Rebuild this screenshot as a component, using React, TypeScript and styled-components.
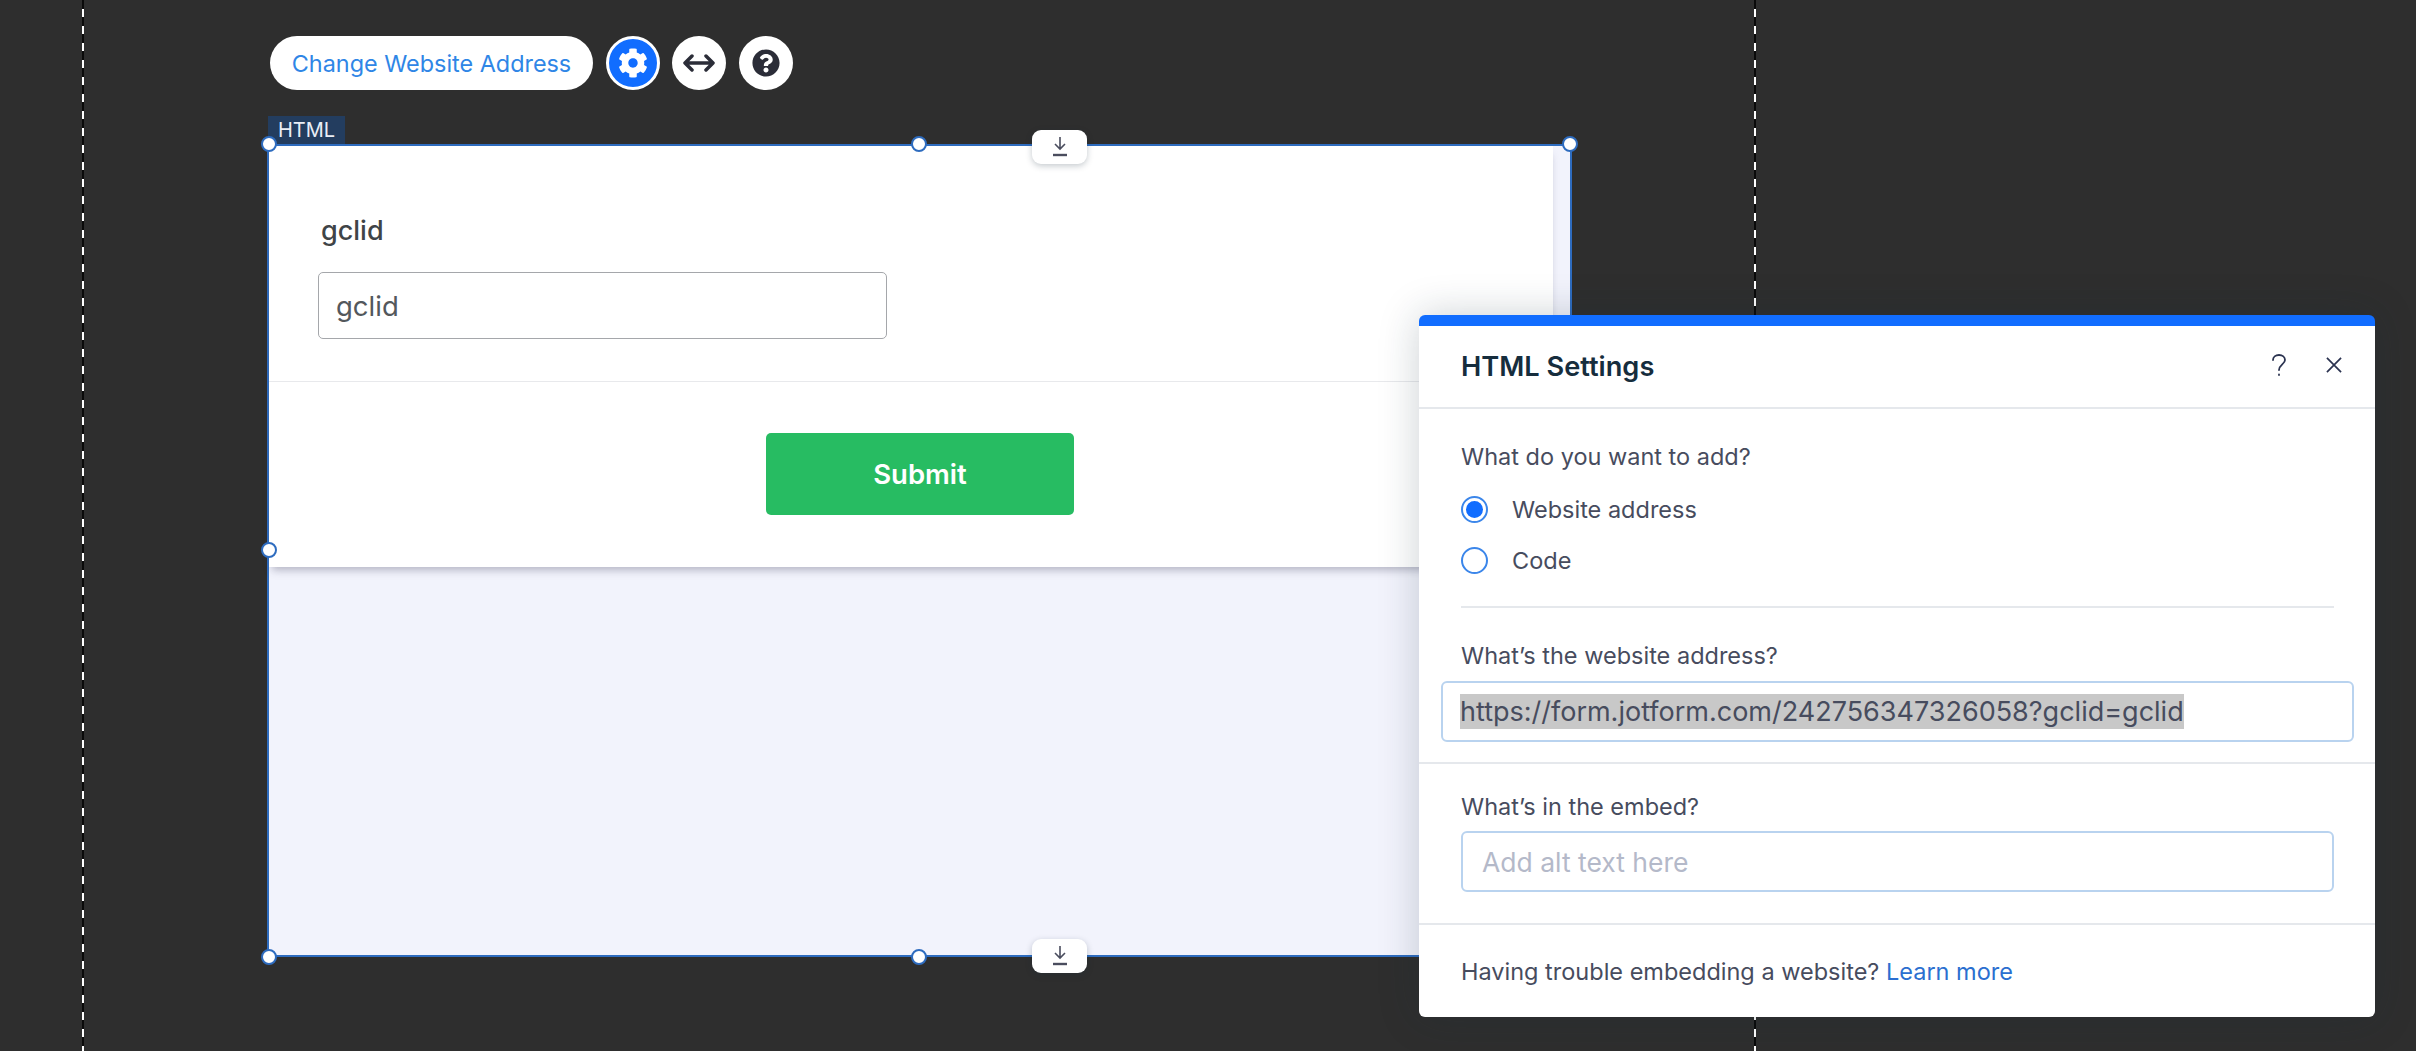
import styled, { createGlobalStyle } from "styled-components";
import { FaCog, FaQuestionCircle } from "react-icons/fa";

const GlobalStyle = createGlobalStyle`
  html, body {
    margin: 0;
    padding: 0;
    background: #2e2e2e;
    overflow: hidden;
  }
  * {
    box-sizing: border-box;
  }
`;

const Page = styled.div`
  position: relative;
  display: flex;
  width: 2416px;
  height: 1051px;
  padding-left: 82px;
  background: #2e2e2e;
  font-family: "Inter", "Liberation Sans", sans-serif;
`;

const Guide = styled.div`
  flex: none;
  width: 2px;
  height: 100%;
  background: repeating-linear-gradient(to bottom, #0a0a0a 0 9px, #ffffff 9px 17px);
`;

const Canvas = styled.div`
  flex: none;
  width: 1670px;
  padding: 36px 0 0 183px;
`;

const Toolbar = styled.div`
  display: flex;
  align-items: center;
  gap: 12.5px;
  height: 54px;
  margin-left: 3px;
`;

const PillButton = styled.button`
  width: 323px;
  height: 54px;
  padding: 0;
  border: none;
  border-radius: 27px;
  background: #fff;
  color: #2f86e6;
  font-family: inherit;
  font-size: 23.4px;
  white-space: nowrap;
`;

const RoundButton = styled.div<{ $active?: boolean }>`
  display: flex;
  align-items: center;
  justify-content: center;
  width: 54px;
  height: 54px;
  border-radius: 50%;
  background: ${(p) => (p.$active ? "#116dff" : "#fff")};
  border: ${(p) => (p.$active ? "3px solid #fff" : "none")};
  color: ${(p) => (p.$active ? "#fff" : "#2b2d38")};
`;

const Frame = styled.div`
  position: relative;
  width: 1305px;
  height: 813px;
  margin-top: 54px;
  border: 2px solid #2e6cbf;
  background: #f2f3fc;
`;

const Tag = styled.div`
  position: absolute;
  left: -1px;
  top: -30px;
  width: 77px;
  height: 28px;
  padding-left: 10px;
  background: #233d5f;
  color: #e9eef6;
  font-size: 20px;
  line-height: 28px;
`;

const Handle = styled.span<{ $x: string; $y: string }>`
  position: absolute;
  left: ${(p) => p.$x};
  top: ${(p) => p.$y};
  width: 16px;
  height: 16px;
  margin: -8px 0 0 -8px;
  border-radius: 50%;
  border: 2px solid #2e6cbf;
  background: #fff;
`;

const DragTab = styled.div<{ $bottom?: boolean }>`
  position: absolute;
  left: 763px;
  ${(p) => (p.$bottom ? "bottom: -18px;" : "top: -16px;")}
  display: flex;
  align-items: center;
  justify-content: center;
  width: 55px;
  height: 34px;
  border-radius: 9px;
  background: #fff;
  box-shadow: 0 2px 6px rgba(22, 45, 61, 0.25);
`;

const FormCard = styled.div`
  width: 1284px;
  height: 421px;
  background: #fff;
  box-shadow: 0 6px 8px -3px rgba(60, 60, 90, 0.35);
`;

const FormBody = styled.div`
  height: 236px;
  padding: 68px 0 0 49px;
  border-bottom: 1px solid #e8e9ec;
`;

const FieldLabel = styled.div`
  margin-left: 3px;
  padding-top: 1px;
  color: #3f4447;
  font-size: 27px;
  font-weight: 500;
  line-height: 32px;
`;

const TextBox = styled.div`
  display: flex;
  align-items: center;
  width: 569px;
  height: 67px;
  margin-top: 25px;
  padding-left: 17px;
  border: 1px solid #a5a7ab;
  border-radius: 5px;
  color: #53585c;
  font-size: 27.5px;
`;

const FormFooter = styled.div`
  display: flex;
  justify-content: center;
  padding: 51px 0 0 18px;
`;

const SubmitButton = styled.button`
  width: 308px;
  height: 82px;
  border: none;
  border-radius: 5px;
  background: #27bc62;
  color: #fff;
  font-family: inherit;
  font-size: 27.5px;
  font-weight: 600;
`;

const Panel = styled.div`
  position: absolute;
  left: 1419px;
  top: 315px;
  width: 956px;
  height: 702px;
  border-top: 11px solid #116dff;
  border-radius: 6px;
  background: #fff;
  box-shadow: 0 0 40px rgba(22, 45, 61, 0.22);
  color: #474c5e;
  font-size: 23.5px;
`;

const PanelHeader = styled.div`
  display: flex;
  align-items: center;
  justify-content: space-between;
  height: 83px;
  padding: 0 33px 0 42px;
  border-bottom: 2px solid #e5e8ec;
`;

const PanelTitle = styled.div`
  color: #162d3d;
  font-size: 27.2px;
  font-weight: 600;
`;

const HeaderActions = styled.div`
  display: flex;
  align-items: center;
  gap: 40px;
  margin-top: -3px;
`;

const Section = styled.div`
  padding: 0 41px 0 42px;
`;

const Question = styled.div<{ $top: number }>`
  padding-top: ${(p) => p.$top}px;
  line-height: 28px;
`;

const RadioRow = styled.div<{ $top: number }>`
  display: flex;
  align-items: center;
  gap: 24px;
  height: 28px;
  margin-top: ${(p) => p.$top}px;
`;

const Radio = styled.span<{ $checked?: boolean }>`
  flex: none;
  width: 27px;
  height: 27px;
  padding: 3px;
  border: 2px solid #3b86ea;
  border-radius: 50%;
  background: ${(p) => (p.$checked ? "#116dff" : "#fff")};
  background-clip: content-box;
`;

const InnerRule = styled.div`
  height: 2px;
  margin-top: 32px;
  background: #e5e8ec;
`;

const FullRule = styled.div<{ $top: number }>`
  height: 2px;
  margin-top: ${(p) => p.$top}px;
  background: #e5e8ec;
`;

const AddressBox = styled.div`
  display: flex;
  align-items: center;
  height: 61px;
  margin: 11px 21px 0 22px;
  padding-left: 17px;
  border: 2px solid #b9d3ef;
  border-radius: 6px;
  font-size: 27px;
`;

const Selected = styled.span`
  height: 35px;
  background: #c8c8c8;
  color: #474c5e;
  line-height: 35px;
  white-space: nowrap;
`;

const AltBox = styled.div`
  display: flex;
  align-items: center;
  height: 61px;
  margin-top: 10px;
  padding-left: 19px;
  border: 2px solid #b9d3ef;
  border-radius: 6px;
  color: #b4b9c9;
  font-size: 26.5px;
`;

const Footer = styled.div`
  padding: 33px 42px 0;
  line-height: 28px;
`;

const LearnMore = styled.a`
  color: #2b6fd0;
`;

const ResizeIcon = () => (
  <svg width="32" height="22" viewBox="0 0 32 22" fill="none" stroke="#2b2d38" strokeWidth="3.5" strokeLinecap="round" strokeLinejoin="round">
    <path d="M3 11h26M9 4l-7 7 7 7M23 4l7 7-7 7" />
  </svg>
);

const DragIcon = () => (
  <svg width="18" height="20" viewBox="0 0 18 20" fill="none" stroke="#4a4d5e" strokeWidth="1.6">
    <path d="M9 0v11M4 7l5 5 5-5" />
    <path d="M2 18h14" strokeWidth="2.4" />
  </svg>
);

const HelpIcon = () => (
  <svg width="14" height="22" viewBox="0 0 14 22" fill="none" stroke="#2b3350" strokeWidth="1.8" strokeLinecap="round">
    <path d="M1 6c0-3 2.5-5 6-5s6 2 6 5c0 4-6 5-6 10" />
    <path d="M7 20.5v.5" />
  </svg>
);

const CloseIcon = () => (
  <svg width="16" height="16" viewBox="0 0 17 17" fill="none" stroke="#2b3350" strokeWidth="1.8">
    <path d="M1 1l15 15M16 1L1 16" />
  </svg>
);

const App = () => {
  return (
    <Page>
      <GlobalStyle />
      <Guide />
      <Canvas>
        <Toolbar>
          <PillButton>Change Website Address</PillButton>
          <RoundButton $active>
            <FaCog size={30} />
          </RoundButton>
          <RoundButton>
            <ResizeIcon />
          </RoundButton>
          <RoundButton>
            <FaQuestionCircle size={28} />
          </RoundButton>
        </Toolbar>
        <Frame>
          <Tag>HTML</Tag>
          <FormCard>
            <FormBody>
              <FieldLabel>gclid</FieldLabel>
              <TextBox>gclid</TextBox>
            </FormBody>
            <FormFooter>
              <SubmitButton>Submit</SubmitButton>
            </FormFooter>
          </FormCard>
          <Handle $x="0" $y="-2px" />
          <Handle $x="650px" $y="-2px" />
          <Handle $x="1301px" $y="-2px" />
          <Handle $x="0" $y="404px" />
          <Handle $x="0" $y="811px" />
          <Handle $x="650px" $y="811px" />
          <DragTab>
            <DragIcon />
          </DragTab>
          <DragTab $bottom>
            <DragIcon />
          </DragTab>
        </Frame>
      </Canvas>
      <Guide />
      <Panel>
        <PanelHeader>
          <PanelTitle>HTML Settings</PanelTitle>
          <HeaderActions>
            <HelpIcon />
            <CloseIcon />
          </HeaderActions>
        </PanelHeader>
        <Section>
          <Question $top={34}>What do you want to add?</Question>
          <RadioRow $top={24}>
            <Radio $checked />
            Website address
          </RadioRow>
          <RadioRow $top={23}>
            <Radio />
            Code
          </RadioRow>
          <InnerRule />
          <Question $top={34}>What&rsquo;s the website address?</Question>
        </Section>
        <AddressBox>
          <Selected>https://form.jotform.com/242756347326058?gclid=gclid</Selected>
        </AddressBox>
        <FullRule $top={20} />
        <Section>
          <Question $top={29}>What&rsquo;s in the embed?</Question>
          <AltBox>Add alt text here</AltBox>
        </Section>
        <FullRule $top={31} />
        <Footer>
          Having trouble embedding a website? <LearnMore>Learn more</LearnMore>
        </Footer>
      </Panel>
    </Page>
  );
};

export default App;
